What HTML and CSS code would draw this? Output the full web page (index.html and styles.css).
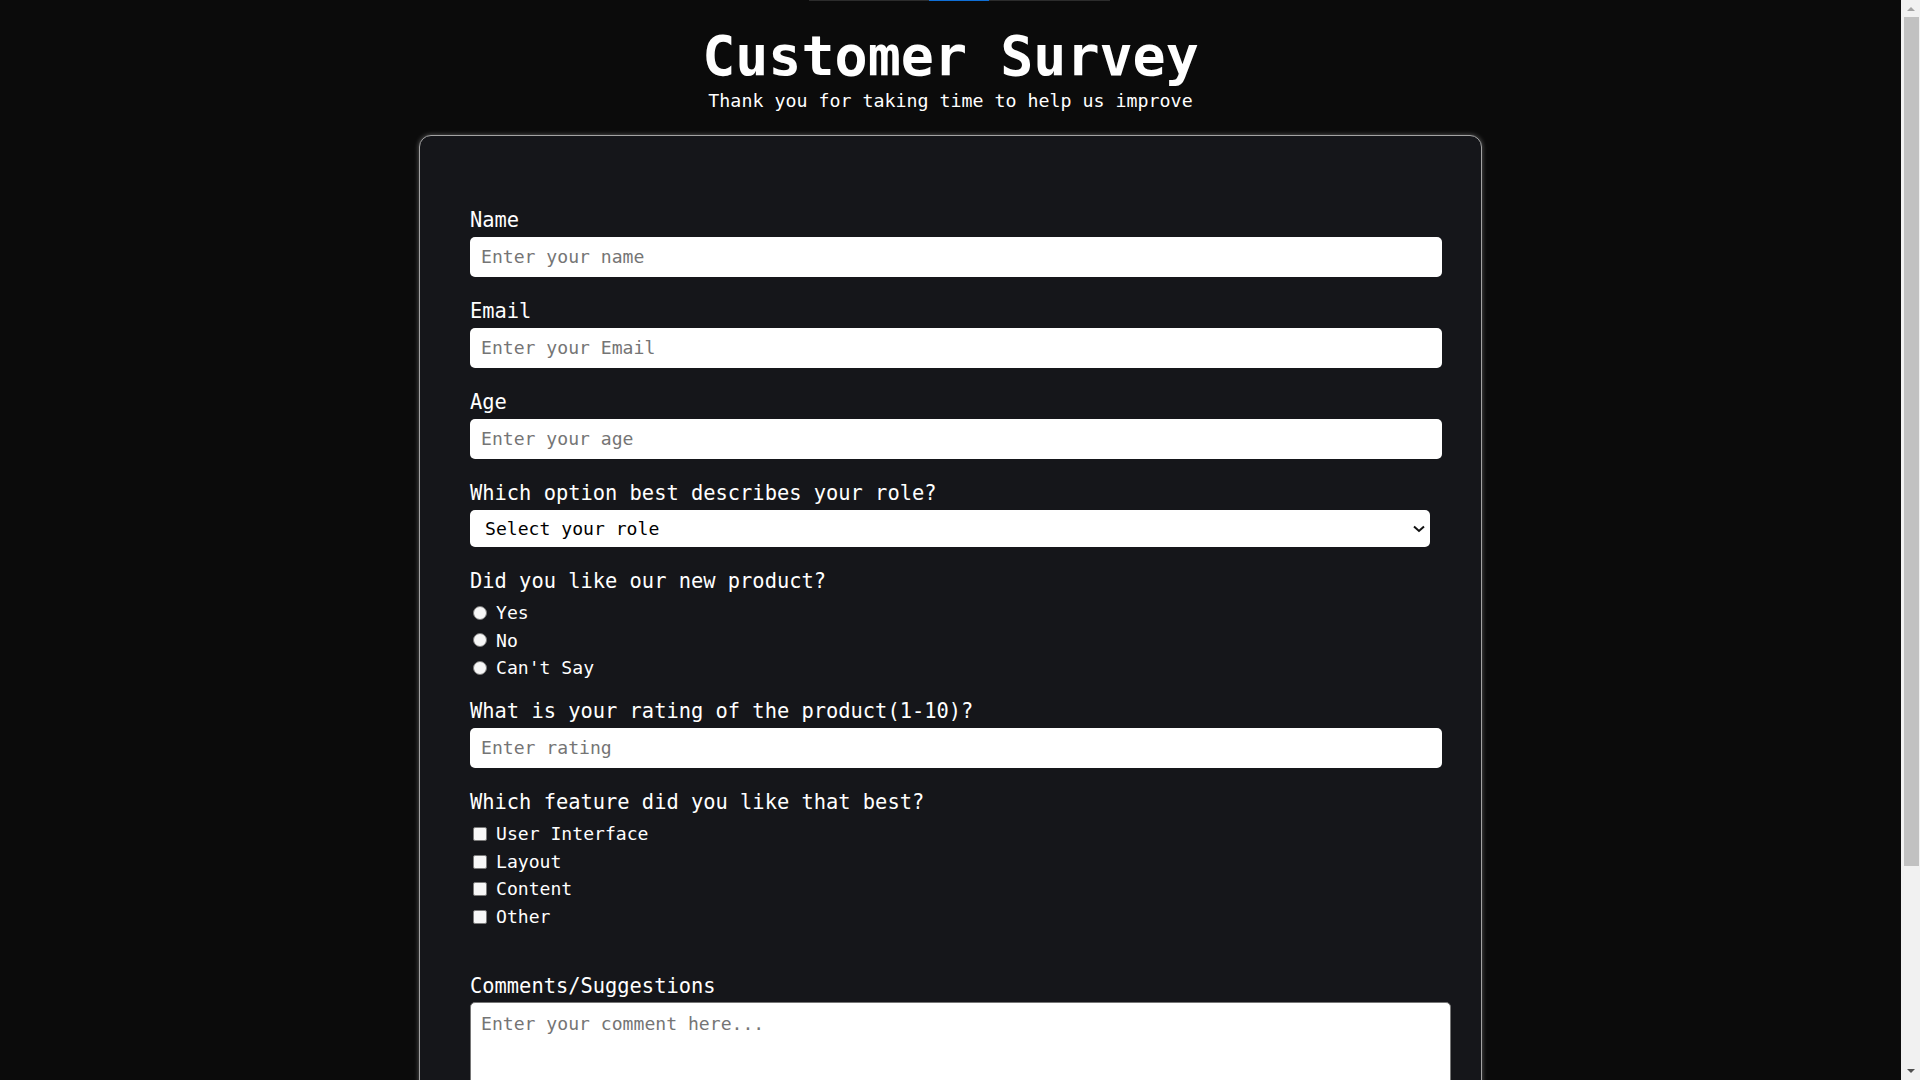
FILE: index.html
```html
<!DOCTYPE html>
<html lang="en">
<head>
<meta charset="utf-8">
<title>Customer Survey</title>
<link rel="stylesheet" href="styles.css">
</head>
<body>
<div class="topbar"><div class="topbar-active"></div></div>
<h1 class="title" id="title">Customer Survey</h1>
<p class="subtitle" id="description">Thank you for taking time to help us improve</p>
<form class="card" id="survey-form">
  <div class="group">
    <label class="field-label" for="name">Name</label>
    <input class="text-input" id="name" type="text" placeholder="Enter your name">
  </div>
  <div class="group">
    <label class="field-label" for="email">Email</label>
    <input class="text-input" id="email" type="email" placeholder="Enter your Email">
  </div>
  <div class="group">
    <label class="field-label" for="number">Age</label>
    <input class="text-input" id="number" type="text" placeholder="Enter your age">
  </div>
  <div class="group group-select">
    <label class="field-label" for="dropdown">Which option best describes your role?</label>
    <div class="select-wrap">
      <select class="select" id="dropdown">
        <option>Select your role</option>
        <option>Student</option>
        <option>Full Time Job</option>
        <option>Full Time Learner</option>
        <option>Prefer not to say</option>
        <option>Other</option>
      </select>
      <svg class="chevron" width="12" height="8" viewBox="0 0 12 8"><path d="M1 1.5 L6 6 L11 1.5" fill="none" stroke="#111" stroke-width="2"/></svg>
    </div>
  </div>
  <div class="group group-radio">
    <div class="field-label">Did you like our new product?</div>
    <div class="options">
      <label class="option"><input class="radio" type="radio" name="like" value="yes"><span>Yes</span></label>
      <label class="option"><input class="radio" type="radio" name="like" value="no"><span>No</span></label>
      <label class="option"><input class="radio" type="radio" name="like" value="cantsay"><span>Can't Say</span></label>
    </div>
  </div>
  <div class="group">
    <label class="field-label" for="rating">What is your rating of the product(1-10)?</label>
    <input class="text-input" id="rating" type="text" placeholder="Enter rating">
  </div>
  <div class="group group-check">
    <div class="field-label">Which feature did you like that best?</div>
    <div class="options options-check">
      <label class="option"><input class="check" type="checkbox" value="ui"><span>User Interface</span></label>
      <label class="option"><input class="check" type="checkbox" value="layout"><span>Layout</span></label>
      <label class="option"><input class="check" type="checkbox" value="content"><span>Content</span></label>
      <label class="option"><input class="check" type="checkbox" value="other"><span>Other</span></label>
    </div>
  </div>
  <div class="group group-last">
    <label class="field-label" for="comments">Comments/Suggestions</label>
    <textarea class="textarea" id="comments" placeholder="Enter your comment here..."></textarea>
  </div>
  <button class="submit" type="submit" id="submit">Submit</button>
</form>
<div class="scrollbar" aria-hidden="true">
  <div class="sb-arrow sb-up"></div>
  <div class="sb-thumb"></div>
  <div class="sb-arrow sb-down"></div>
</div>
</body>
</html>
```
FILE: styles.css
```css
html, body {
  margin: 0;
  padding: 0;
  background: #0b0b0b;
  color: #ffffff;
  font-family: "DejaVu Sans Mono", "Liberation Mono", monospace;
}

body {
  margin-right: 19px;
  padding-bottom: 27px;
}

.topbar {
  width: 301px;
  height: 1px;
  margin-left: 809px;
  background: #2c2c2c;
  display: flex;
}

.topbar-active {
  width: 60px;
  margin-left: 120px;
  background: #0f6fd6;
}

.title {
  margin: 28px 0 0;
  font-size: 55px;
  line-height: 55px;
  font-weight: bold;
  text-align: center;
}

.subtitle {
  margin: 7px 0 0;
  font-size: 18.3px;
  line-height: 20px;
  text-align: center;
}

.card {
  box-sizing: border-box;
  width: 1063px;
  margin: 24px auto 0;
  padding: 71px 30px 60px 50px;
  background: #15161a;
  border: 1px solid #a3a3a3;
  border-radius: 12px;
  box-shadow: 0 0 5px rgba(200, 200, 200, 0.45);
}

.group {
  display: flex;
  flex-direction: column;
  align-items: flex-start;
  margin-bottom: 21.5px;
}

.group-select {
  margin-bottom: 21px;
}

.group-radio {
  margin-bottom: 16.5px;
}

.group-check {
  margin-bottom: 42.5px;
}

.group-last {
  margin-bottom: 30px;
}

.field-label {
  display: block;
  font-size: 20.4px;
  line-height: 24.5px;
  padding-top: 1px;
  margin-bottom: 4px;
}

.text-input {
  box-sizing: border-box;
  display: block;
  width: 972px;
  height: 40px;
  margin: 0;
  padding: 0 11px;
  border: none;
  border-radius: 5px;
  background: #ffffff;
  color: #000;
  font-family: "DejaVu Sans Mono", monospace;
  font-size: 18.1px;
  outline: none;
}

.text-input::placeholder,
.textarea::placeholder {
  color: #757575;
}

.select-wrap {
  position: relative;
  width: 960px;
}

.select {
  box-sizing: border-box;
  display: block;
  width: 960px;
  height: 37px;
  margin: 0;
  padding: 0 0 0 15px;
  border: none;
  border-radius: 5px;
  background: #ffffff;
  color: #000;
  font-family: "DejaVu Sans Mono", monospace;
  font-size: 18.1px;
  -webkit-appearance: none;
  appearance: none;
  outline: none;
}

.chevron {
  position: absolute;
  right: 5px;
  top: 15px;
  pointer-events: none;
}

.options {
  margin-top: 2px;
  display: flex;
  flex-direction: column;
}

.options-check {
  margin-top: 1.75px;
}

.option {
  display: flex;
  align-items: center;
  height: 27.5px;
  font-size: 18.1px;
  line-height: 27.5px;
}

.radio,
.check {
  -webkit-appearance: none;
  appearance: none;
  box-sizing: border-box;
  width: 14px;
  height: 14px;
  margin: 0 9px 0 3px;
  background: #f7f7f7;
  border: 1px solid #7a7a7a;
  flex: none;
}

.radio {
  border-radius: 50%;
}

.check {
  border-radius: 2px;
}

.textarea {
  box-sizing: border-box;
  display: block;
  width: 981px;
  height: 160px;
  margin: 0;
  padding: 10px;
  border: 1px solid #767676;
  border-radius: 5px;
  background: #ffffff;
  color: #000;
  font-family: "DejaVu Sans Mono", monospace;
  font-size: 18.1px;
  resize: vertical;
  outline: none;
}

.submit {
  display: block;
  width: 200px;
  height: 45px;
  margin: 0 auto;
  border: none;
  border-radius: 5px;
  background: #0f6fd6;
  color: #fff;
  font-family: "DejaVu Sans Mono", monospace;
  font-size: 18px;
}

.scrollbar {
  position: fixed;
  top: 0;
  right: 0;
  width: 19px;
  height: 100vh;
  background: #f1f1f1;
  display: flex;
  flex-direction: column;
  align-items: center;
}

.sb-thumb {
  width: 15px;
  height: 849px;
  margin-left: 1px;
  background: #c1c1c1;
}

.sb-arrow {
  width: 0;
  height: 0;
  border-left: 4px solid transparent;
  border-right: 4px solid transparent;
}

.sb-up {
  margin: 7px 0 6px;
  border-bottom: 4px solid #a3a3a3;
}

.sb-down {
  margin-top: auto;
  margin-bottom: 7px;
  border-top: 4px solid #505050;
}
```
